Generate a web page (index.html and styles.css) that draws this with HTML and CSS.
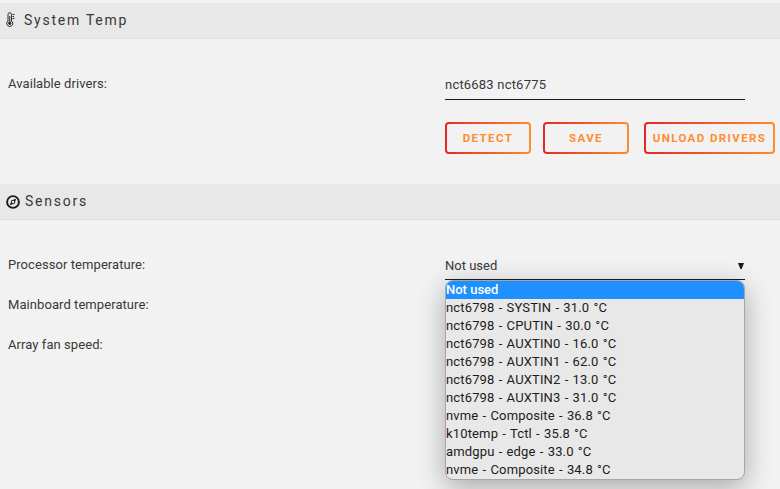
FILE: index.html
```html
<!DOCTYPE html>
<html lang="en">
<head>
    <meta charset="utf-8">
    <title>System Temp</title>
    <link rel="stylesheet" href="styles.css">
</head>
<body>
    <div class="title">
        <svg class="icon-temp" width="10" height="15" viewBox="0 0 10 15" fill="none" stroke="#2b2b2b">
            <path d="M2 9V2.5a1.75 1.75 0 0 1 3.5 0V9a3 3 0 1 1-3.5 0z"/>
            <path d="M3.75 4v7M6.5 2.5h2M6.5 4.5h1.5M6.5 6.5h2"/>
            <circle cx="3.75" cy="11.3" r="1.2" fill="#2b2b2b"/>
        </svg>
        <span>System Temp</span>
    </div>
    <form class="drivers">
        <div class="row">
            <label for="drivers">Available drivers:</label>
            <input type="text" id="drivers" value="nct6683 nct6775">
        </div>
        <div class="buttons">
            <button type="button">Detect</button>
            <button type="button">Save</button>
            <button type="button" class="wide">Unload drivers</button>
        </div>
    </form>

    <div class="title">
        <svg class="icon-compass" width="14" height="14" viewBox="0 0 14 14">
            <circle cx="7" cy="7" r="5.9" fill="none" stroke="#1c1c1c" stroke-width="1.9"/>
            <path d="M10 3.7 8.8 8.5 4 10.3 5.2 5.5z" fill="#1c1c1c"/>
            <circle cx="7" cy="7" r="1.25" fill="#e8e8e8"/>
        </svg>
        <span>Sensors</span>
    </div>
    <form class="sensors">
        <div class="row">
            <span class="label">Processor temperature:</span>
            <div class="select">
                <span>Not used</span>
                <svg width="6" height="6" viewBox="0 0 6 6"><path d="M0 0h6L3.7 6H2.3z" fill="#1c1c1c"/></svg>
                <ul class="options">
                    <li class="selected">Not used</li>
                    <li>nct6798 - SYSTIN - 31.0 °C</li>
                    <li>nct6798 - CPUTIN - 30.0 °C</li>
                    <li>nct6798 - AUXTIN0 - 16.0 °C</li>
                    <li>nct6798 - AUXTIN1 - 62.0 °C</li>
                    <li>nct6798 - AUXTIN2 - 13.0 °C</li>
                    <li>nct6798 - AUXTIN3 - 31.0 °C</li>
                    <li>nvme - Composite - 36.8 °C</li>
                    <li>k10temp - Tctl - 35.8 °C</li>
                    <li>amdgpu - edge - 33.0 °C</li>
                    <li>nvme - Composite - 34.8 °C</li>
                </ul>
            </div>
        </div>
        <div class="row">
            <span class="label">Mainboard temperature:</span>
            <div class="select"></div>
        </div>
        <div class="row">
            <span class="label">Array fan speed:</span>
            <div class="select"></div>
        </div>
    </form>
</body>
</html>
```
FILE: styles.css
```css
* {
    box-sizing: border-box;
}

body {
    margin: 0;
    padding-top: 3px;
    height: 489px;
    overflow: hidden;
    background-color: #f2f2f2;
    color: #383838;
    font-family: Roboto, sans-serif;
    font-size: 13px;
    letter-spacing: 0.07px;
}

.title {
    display: flex;
    align-items: center;
    height: 36px;
    padding: 0 0 2px 6px;
    background-color: #e8e8e8;
    border-bottom: 1px solid #e0e0e0;
    font-size: 14px;
    letter-spacing: 1.75px;
}

.icon-temp {
    margin-right: 8px;
}

.icon-compass {
    margin: 2px 5px 0 0;
}

.drivers {
    padding: 25px 0 30px;
}

.sensors {
    padding-top: 25px;
}

.row {
    display: grid;
    grid-template-columns: 437px 300px;
    align-items: center;
    height: 40px;
    padding-left: 8px;
}

label,
.label {
    line-height: 18px;
    padding-bottom: 1px;
}

input,
.select {
    width: 300px;
    height: 31px;
    margin-top: 1px;
    padding: 1px 0 0;
    border: none;
    border-bottom: 1px solid #1c1c1c;
    background: transparent;
    color: #383838;
    font: inherit;
    letter-spacing: 0.2px;
}

.select {
    position: relative;
    display: flex;
    align-items: center;
    justify-content: space-between;
    margin-top: -1px;
    padding: 3px 1px 0 0;
    letter-spacing: 0;
}

.buttons {
    display: flex;
    gap: 12px;
    margin: 18px 0 0 445px;
}

button {
    width: 86px;
    height: 32px;
    padding: 0;
    border: 2px solid transparent;
    border-radius: 4px;
    background: linear-gradient(#f2f2f2, #f2f2f2) padding-box, linear-gradient(90deg, #e22828 0%, #ff8c2f 100%) border-box;
    color: #ff8c2f;
    font-family: Roboto, sans-serif;
    font-size: 11.5px;
    font-weight: bold;
    letter-spacing: 1.4px;
    text-transform: uppercase;
    white-space: nowrap;
}

.wide {
    width: 131px;
    margin-left: 3px;
}

/* open dropdown list */
.options {
    position: absolute;
    z-index: 1;
    top: 31px;
    left: 0;
    width: 300px;
    margin: 0;
    padding: 0;
    overflow: hidden;
    list-style: none;
    background-color: #e8e8e8;
    border: 1px solid #a6a6a6;
    border-radius: 8px;
    box-shadow: 0 8px 28px rgba(0, 0, 0, 0.3);
    color: #1c1c1c;
    letter-spacing: 0.15px;
    word-spacing: 0.8px;
}

.options li {
    height: 18px;
    line-height: 18px;
    white-space: nowrap;
}

.options .selected {
    background-color: #1e90ff;
    color: #fff;
    font-weight: 500;
    letter-spacing: 0;
    word-spacing: 0;
}
```
